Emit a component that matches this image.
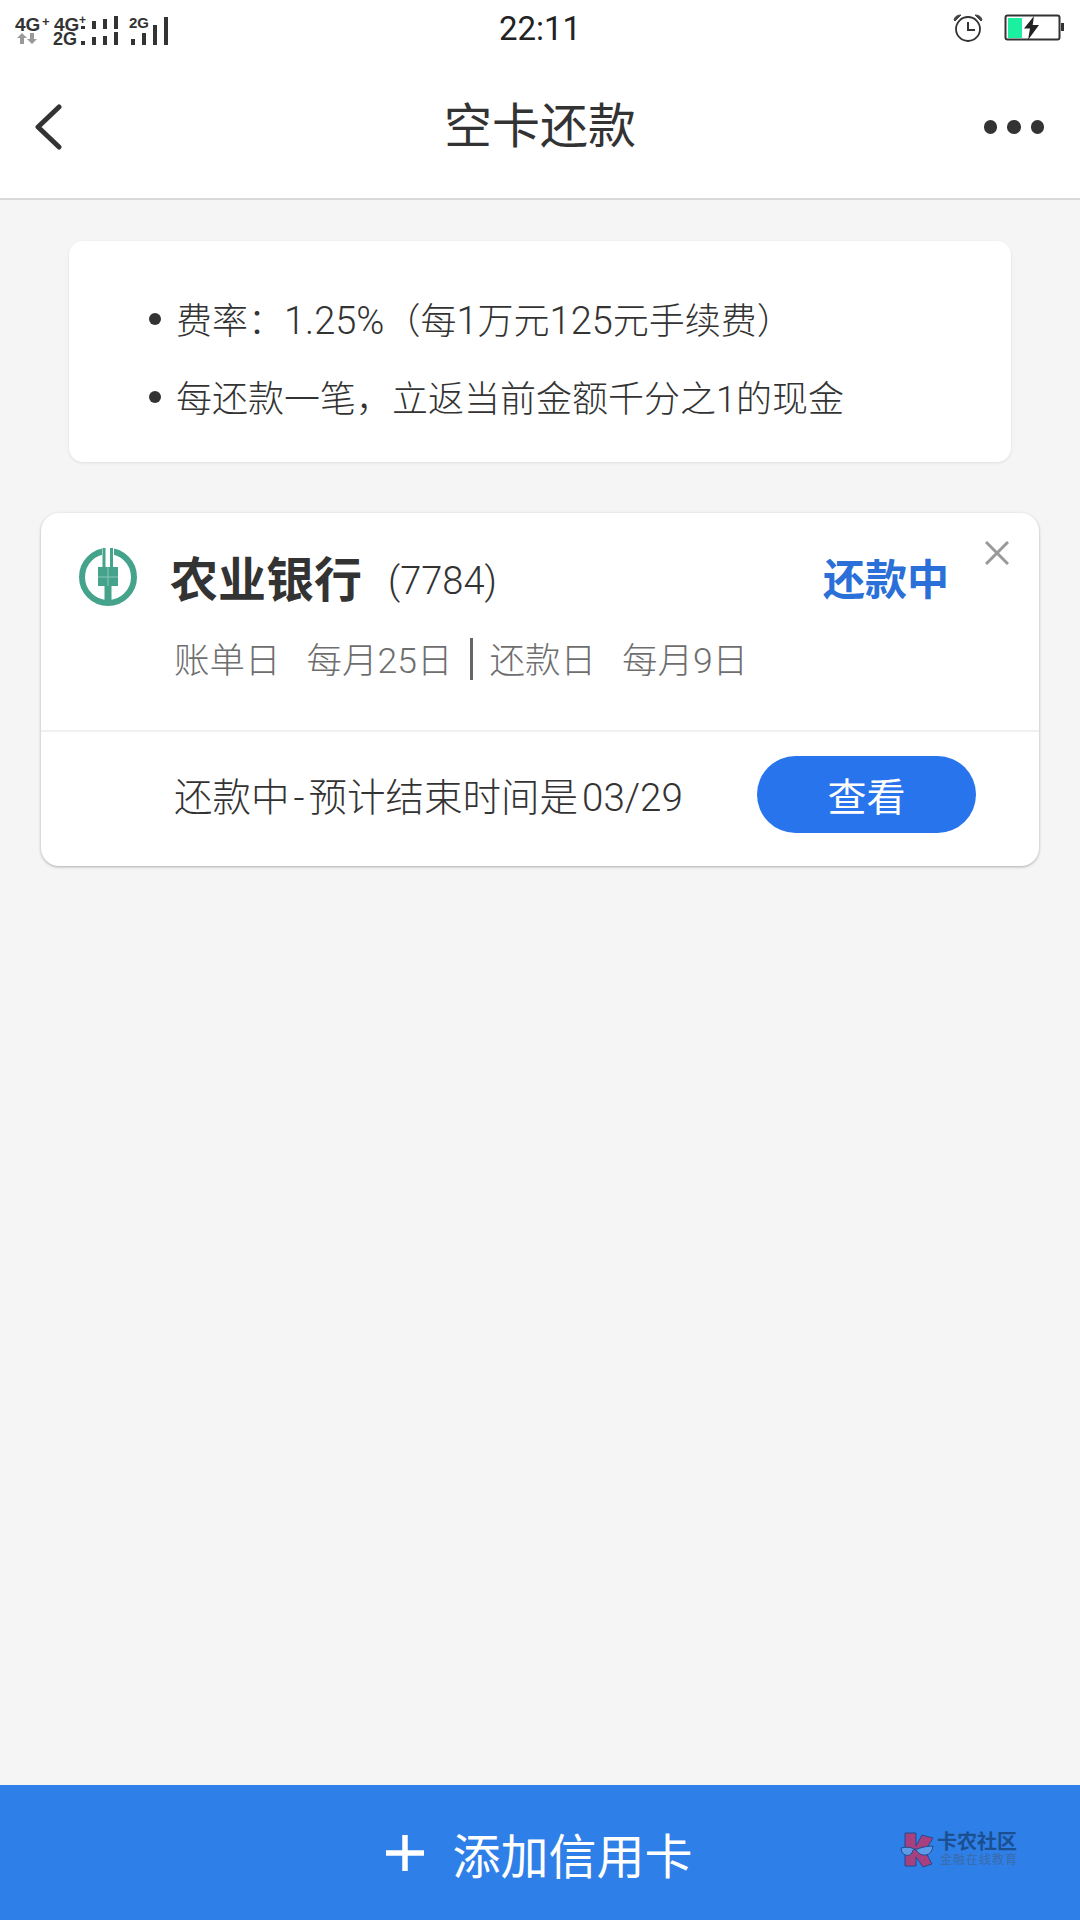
<script>
</script>

<div class="page">
  <header class="top">
    <div class="status">
      <svg class="signal" width="180" height="46" viewBox="0 0 180 46">
        <g fill="#333" font-family="'Liberation Sans', Arial, sans-serif" font-weight="700">
          <text x="15" y="27" font-size="19">4G</text>
          <text x="42" y="22" font-size="13">+</text>
          <text x="54" y="27" font-size="19">4G</text>
          <text x="79" y="20" font-size="12">+</text>
          <text x="53" y="41" font-size="18">2G</text>
          <text x="129" y="24" font-size="15">2G</text>
          <rect x="81" y="22" width="4" height="3" />
          <rect x="92" y="17" width="4" height="8" />
          <rect x="103" y="15" width="4" height="10" />
          <rect x="114" y="12" width="4" height="13" />
          <rect x="81" y="37" width="4" height="4" />
          <rect x="92" y="33" width="4" height="8" />
          <rect x="103" y="32" width="4" height="9" />
          <rect x="114" y="28" width="4" height="13" />
          <rect x="131" y="35" width="4" height="6" />
          <rect x="142" y="29" width="4" height="12" />
          <rect x="153" y="21" width="4" height="20" />
          <rect x="164" y="13" width="4" height="28" />
        </g>
        <path d="M20 40v-6h-3l5-5 5 5h-3v6zM30 29v6h-3l5 5 5-5h-3v-6z" fill="#999" />
      </svg>
      <span class="clock">22:11</span>
      <div class="status-right">
        <svg width="30" height="30" viewBox="0 0 30 30">
          <circle cx="15" cy="16" r="12" fill="none" stroke="#333" stroke-width="1.8" />
          <path d="M15 9v8h7" fill="none" stroke="#333" stroke-width="2" />
          <path d="M1 7q1-5 7-5l-6 6zM29 7q-1-5-7-5l6 6z" fill="#444" stroke="#444" />
        </svg>
        <svg width="60" height="28" viewBox="0 0 60 28">
          <rect x="1.500" y="1.500" width="54" height="24" rx="2" fill="#fff" stroke="#333" stroke-width="2" />
          <rect x="4" y="4" width="14" height="20" fill="#1bf0a0" />
          <rect x="57" y="9" width="3" height="8" fill="#333" />
          <path d="M30 2 L20 14.500 L26 14.500 L24 26 L35 11 L28.700 11 Z" fill="#222" />
        </svg>
      </div>
    </div>
    <nav class="nav">
      <svg class="back" width="30" height="46" viewBox="0 0 30 46">
        <path d="M25 3 L4 23 L25 43" fill="none" stroke="#333" stroke-width="5" stroke-linecap="round" stroke-linejoin="round" />
      </svg>
      <h1>空卡还款</h1>
      <div class="dots"><i></i><i></i><i></i></div>
    </nav>
  </header>

  <main>
    <section class="info">
      <p><span class="bullet"></span><span>费率：<span class="num">1.25%</span>（每<span class="num">1</span>万元<span class="num">125</span>元手续费）</span></p>
      <p><span class="bullet"></span><span>每还款一笔，立返当前金额千分之1的现金</span></p>
    </section>

    <section class="card">
      <div class="card-top">
        <svg class="logo" width="60" height="60" viewBox="0 0 60 60">
          <circle cx="30" cy="30" r="26" fill="none" stroke="#45a38c" stroke-width="6" />
          <rect x="24" y="0" width="12" height="20" fill="#fff" />
          <path d="M24.500 1h3v19h4.500V1h3v19H40v19h-6.500v19h-7V39H20V20h4.500z" fill="#45a38c" />
          <path d="M20 30h20M30 20v19" stroke="#8cc7b8" stroke-width="1" />
        </svg>
        <div class="card-main">
          <div class="bank-row">
            <strong>农业银行</strong>
            <span class="tail">(7784)</span>
            <span class="state">还款中</span>
          </div>
          <div class="dates">
            <span>账单日</span>
            <span class="when">每月25日</span>
            <span class="sep"></span>
            <span>还款日</span>
            <span class="when">每月9日</span>
          </div>
        </div>
        <svg class="close" width="24" height="24" viewBox="0 0 24 24">
          <path d="M1 1 L23 23 M23 1 L1 23" stroke="#999" stroke-width="3" />
        </svg>
      </div>
      <div class="card-bottom">
        <span>还款中<span class="dash">-</span>预计结束时间是<span class="end-date">03/29</span></span>
        <button>查看</button>
      </div>
    </section>
  </main>

  <footer class="add">
    <div class="add-label">
      <svg width="38" height="36" viewBox="0 0 38 36"><path d="M0 18h38M19 0v36" stroke="#fff" stroke-width="5.500" /></svg>
      <span>添加信用卡</span>
    </div>
    <div class="watermark">
      <svg width="34" height="36" viewBox="0 0 34 36">
        <path d="M5 1h11v13L22 3l11 3-8 13 7 13-9 3-7-10v9H5z" fill="#a83f7f" stroke="#1f4d8f" stroke-width="1" />
        <path d="M1 16q8-2 13 1 3 1 6-1 6-2 13-2-1 8-7 9-6 1-10-5-3-2-4 3-3 4-7 2-4-2-4-7z" fill="#5d9be8" stroke="#1f4d8f" stroke-width="1" />
      </svg>
      <div class="wm-text">
        <b>卡农社区</b>
        <small>金融在线教育</small>
      </div>
    </div>
  </footer>
</div>

<style>
  :global(body) {
    margin: 0;
    background: #f5f5f5;
  }

  .page {
    width: 1080px;
    height: 1920px;
    display: flex;
    flex-direction: column;
    background: #f5f5f5;
    font-family: 'Roboto', 'Noto Sans CJK SC', sans-serif;
    color: #333;
  }

  .top {
    height: 198px;
    background: #fff;
    border-bottom: 2px solid #d9d9d9;
  }

  .status {
    height: 56px;
    display: flex;
    align-items: center;
    justify-content: space-between;
    position: relative;
  }

  .signal {
    margin-top: -2px;
  }

  .clock {
    position: absolute;
    left: 0;
    right: 0;
    top: 10px;
    text-align: center;
    font-size: 33px;
    line-height: 38px;
    color: #222;
  }

  .status-right {
    display: flex;
    align-items: center;
    gap: 21px;
    padding-right: 16px;
  }

  .nav {
    height: 142px;
    display: flex;
    align-items: center;
    justify-content: space-between;
    padding: 0 34px;
    position: relative;
  }

  h1 {
    position: absolute;
    left: 0;
    right: 0;
    margin: 0;
    text-align: center;
    font-size: 48px;
    font-weight: 400;
    line-height: 60px;
    color: #333;
  }

  .dots {
    display: flex;
    gap: 10px;
    padding-right: 2px;
  }

  .dots i {
    width: 13.500px;
    height: 13.500px;
    border-radius: 50%;
    background: #333;
  }

  main {
    flex: 1;
    padding: 41px 41px 0;
  }

  .info {
    margin: 0 28px;
    height: 221px;
    box-sizing: border-box;
    padding: 57px 0 0 80px;
    background: #fff;
    border-radius: 14px;
    box-shadow: 0 1px 3px rgba(0, 0, 0, 0.1);
  }

  .info p {
    margin: 0 0 32px;
    font-size: 36px;
    font-weight: 300;
    line-height: 46px;
    color: #333;
    display: flex;
    align-items: center;
  }

  .num {
    font-size: 38px;
  }

  .bullet {
    width: 12px;
    height: 12px;
    border-radius: 50%;
    background: #333;
    margin: -6px 15px 0 0;
    flex: none;
  }

  .card {
    margin-top: 51px;
    width: 998px;
    height: 353px;
    background: #fff;
    border-radius: 18px;
    box-shadow: 0 1px 3px rgba(0, 0, 0, 0.3);
    display: flex;
    flex-direction: column;
  }

  .card-top {
    height: 217px;
    border-bottom: 2px solid #f0f0f0;
    display: flex;
    position: relative;
    padding-left: 37px;
  }

  .logo {
    margin-top: 34px;
  }

  .card-main {
    flex: 1;
    padding-left: 32px;
  }

  .bank-row {
    display: flex;
    align-items: center;
    margin-top: 33px;
    line-height: 70px;
  }

  .bank-row strong {
    font-size: 48px;
    font-weight: 700;
    color: #333;
  }

  .tail {
    font-size: 38px;
    font-weight: 300;
    margin-left: 26px;
    color: #333;
  }

  .state {
    margin-left: auto;
    margin-right: 90px;
    font-size: 42px;
    font-weight: 700;
    color: #2a70d8;
  }

  .dates {
    margin-top: 22px;
    padding-left: 4px;
    font-size: 35.500px;
    font-weight: 300;
    line-height: 46px;
    color: #6e6e6e;
    display: flex;
    align-items: center;
  }

  .when {
    margin-left: 26px;
  }

  .sep {
    width: 3px;
    height: 42px;
    background: #666;
    margin: -4px 16px 0 18px;
  }

  .close {
    position: absolute;
    top: 28px;
    right: 30px;
  }

  .card-bottom {
    flex: 1;
    display: flex;
    align-items: center;
    justify-content: space-between;
    padding: 0 63px 10px 133px;
    font-size: 38.500px;
    font-weight: 300;
    color: #333;
  }

  .dash {
    padding: 0 4px;
  }

  .end-date {
    margin-left: 4px;
  }

  button {
    width: 219px;
    height: 77px;
    border: 0;
    border-radius: 39px;
    background: #2874ec;
    color: #fff;
    font-family: inherit;
    font-size: 39px;
    padding: 0;
  }

  .add {
    height: 135px;
    background: #2e7fe8;
    position: relative;
    display: flex;
    align-items: center;
    justify-content: center;
  }

  .add-label {
    display: flex;
    align-items: center;
    gap: 28px;
    color: #fff;
    font-size: 48px;
    margin-left: -1px;
  }

  .watermark {
    position: absolute;
    left: 900px;
    top: 47px;
    display: flex;
    gap: 3px;
    color: #1c4f8f;
  }

  .wm-text {
    display: flex;
    flex-direction: column;
    line-height: 1;
  }

  .wm-text b {
    font-size: 20px;
    line-height: 20px;
  }

  .wm-text small {
    font-size: 12px;
    letter-spacing: 1px;
    margin: 2px 0 0 3px;
    color: #3a6ba8;
  }
</style>
